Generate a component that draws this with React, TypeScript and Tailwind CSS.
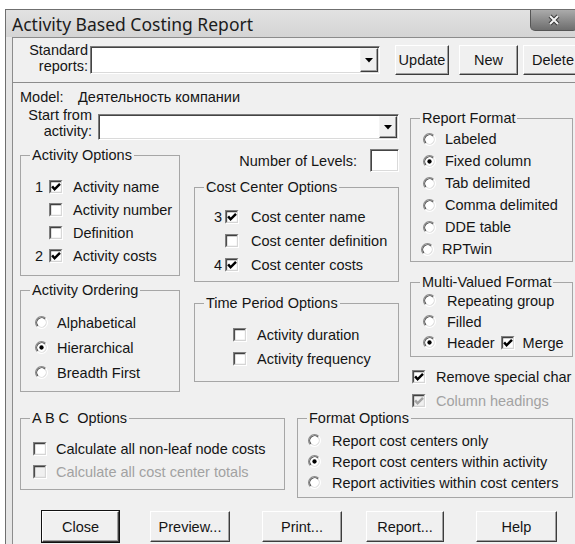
import React from 'react';

type Kids = { children?: React.ReactNode; className?: string };

const Check = ({ checked = false, disabled = false }: { checked?: boolean; disabled?: boolean }) => (
  <svg width="14" height="14" viewBox="0 0 13 13" className="shrink-0">
    <rect x="0" y="0" width="13" height="13" fill={disabled ? '#f0f0f0' : '#fff'} />
    <path d="M0.5 12.5V0.5H12.5" stroke="#808080" fill="none" />
    <path d="M1.5 11.5V1.5H11.5" stroke="#404040" fill="none" />
    <path d="M0.5 12.5H12.5V0.5" stroke="#fff" fill="none" />
    <path d="M1.5 11.5H11.5V1.5" stroke="#d4d4d4" fill="none" />
    {checked && (
      <path d="M2.9 5.9L5.2 8.6L10.2 3.5" stroke={disabled ? '#a4a4a4' : '#000'} strokeWidth="2.3" fill="none" />
    )}
  </svg>
);

const Radio = ({ checked = false }: { checked?: boolean }) => (
  <svg width="13" height="13" viewBox="0 0 12 12" className="shrink-0">
    <circle cx="6" cy="6" r="5.5" fill="#fff" />
    <path d="M2.11 9.89A5.5 5.5 0 0 1 9.89 2.11" stroke="#8c8c8c" fill="none" />
    <path d="M2.82 9.18A4.5 4.5 0 0 1 9.18 2.82" stroke="#4a4a4a" fill="none" />
    <path d="M9.89 2.11A5.5 5.5 0 0 1 2.11 9.89" stroke="#fff" fill="none" />
    <path d="M9.18 2.82A4.5 4.5 0 0 1 2.82 9.18" stroke="#dcdcdc" fill="none" />
    {checked && <circle cx="6" cy="6" r="2" fill="#000" />}
  </svg>
);

const Btn = ({ children, className = '', primary = false }: Kids & { primary?: boolean }) => (
  <button
    className={`flex items-center justify-center bg-[#f0f0f0] border border-t-white border-l-white border-r-[#3c3c3c] border-b-[#3c3c3c] shadow-[inset_-1px_-1px_0_#a0a0a0] ${
      primary ? 'outline outline-1 outline-[#111]' : ''
    } ${className}`}
  >
    {children}
  </button>
);

const Field = ({ children, className = '' }: Kids) => (
  <div
    className={`flex justify-end bg-white p-[1px] border border-t-[#7c7c7c] border-l-[#7c7c7c] border-r-white border-b-white shadow-[inset_1px_1px_0_#444,inset_-1px_-1px_0_#dadada] ${className}`}
  >
    {children}
  </div>
);

const Combo = ({ className = '' }: { className?: string }) => (
  <Field className={className}>
    <div className="flex w-[18px] items-center justify-center bg-[#f0f0f0] border border-t-[#f4f4f4] border-l-[#f4f4f4] border-r-[#3c3c3c] border-b-[#3c3c3c] shadow-[inset_-1px_-1px_0_#a0a0a0]">
      <svg width="8" height="5" viewBox="0 0 8 5">
        <path d="M0 0H8L4 4.5Z" fill="#000" />
      </svg>
    </div>
  </Field>
);

const Group = ({ title, children, className = '' }: Kids & { title: string }) => (
  <fieldset className={`border border-[#a6a6a6] ${className}`}>
    <legend className="ml-[9px] px-[2px] leading-[16px] whitespace-pre">{title}</legend>
    {children}
  </fieldset>
);

export default function App() {
  return (
    <div className="w-[575px] h-[544px] overflow-hidden bg-white font-['Liberation_Sans',Arial,sans-serif] text-[14.5px] leading-[16px] text-[#151515]">
      <div className="mt-[9px] ml-[5px] w-[620px] h-[600px] border-t border-l border-[#6f6f6f] bg-[#e6e6e6]">
        {/* title bar */}
        <div className="flex h-[27px] bg-gradient-to-b from-[#e2e2e2] to-[#d4d4d4]">
          <span className="self-center pl-[6px] font-['Noto_Sans',sans-serif] text-[17.5px] leading-[20px] text-[#1c1c1c]">
            Activity Based Costing Report
          </span>
          <div className="ml-auto mr-[47px] flex h-[21px] w-[48px] items-center justify-center rounded-b-[5px] border border-t-0 border-[#555] bg-gradient-to-b from-[#ababab] to-[#6e6e6e]">
            <svg width="14" height="12" viewBox="0 0 14 12">
              <path d="M3 2L11 10M11 2L3 10" stroke="#3a3a3a" strokeWidth="4" />
              <path d="M3 2L11 10M11 2L3 10" stroke="#f4f4f4" strokeWidth="2" />
            </svg>
          </div>
        </div>

        {/* client area */}
        <div className="ml-[6px] h-full border-t border-l border-[#8c8c8c] bg-[#f0f0f0]">
          <div className="flex h-[45px] border-b border-[#8c8c8c]">
            <div className="mt-[4px] w-[75px] text-right">
              Standard
              <br />
              reports:
            </div>
            <Combo className="ml-[2px] mt-[8px] h-[28px] w-[290px]" />
            <Btn className="ml-[15px] mt-[7px] h-[30px] w-[54px]">Update</Btn>
            <Btn className="ml-[10px] mt-[7px] h-[30px] w-[59px]">New</Btn>
            <Btn className="ml-[5px] mt-[7px] h-[30px] w-[60px]">Delete</Btn>
          </div>

          <div className="pl-[7px]">
            <div className="flex h-[327px]">
              {/* left side */}
              <div className="w-[380px]">
                <div className="mt-[6px] flex">
                  <span className="w-[58px]">Model:</span>
                  <span>Деятельность компании</span>
                </div>
                <div className="mt-[2px] flex">
                  <div className="w-[72px] text-right">
                    Start from
                    <br />
                    activity:
                  </div>
                  <Combo className="ml-[6px] mt-[7px] h-[26px] w-[301px]" />
                </div>

                <div className="flex">
                  <div className="w-[160px]">
                    <Group title="Activity Options" className="mt-[7px] h-[129px]">
                      <div className="mt-[12px] flex flex-col">
                        {[
                          ['1', true, 'Activity name'],
                          ['', false, 'Activity number'],
                          ['', false, 'Definition'],
                          ['2', true, 'Activity costs'],
                        ].map(([n, c, label]) => (
                          <div key={label as string} className="flex h-[23px] items-center">
                            <span className="w-[22px] text-right">{n}</span>
                            <span className="ml-[6px]">
                              <Check checked={c as boolean} />
                            </span>
                            <span className="ml-[10px]">{label}</span>
                          </div>
                        ))}
                      </div>
                    </Group>
                    <Group title="Activity Ordering" className="mt-[6px] h-[110px]">
                      <div className="mt-[12px] flex flex-col pl-[14px]">
                        {['Alphabetical', 'Hierarchical', 'Breadth First'].map((label, i) => (
                          <div key={label} className="flex h-[25px] items-center">
                            <Radio checked={i === 1} />
                            <span className="ml-[9px]">{label}</span>
                          </div>
                        ))}
                      </div>
                    </Group>
                  </div>

                  <div className="ml-[14px] w-[205px]">
                    <div className="mt-[9px] flex h-[23px] items-center justify-end">
                      <span>Number of Levels:</span>
                      <Field className="ml-[13px] h-[23px] w-[29px]" />
                    </div>
                    <Group title="Cost Center Options" className="mt-[7px] h-[103px]">
                      <div className="mt-[10px] flex flex-col">
                        {[
                          ['3', true, 'Cost center name'],
                          ['', false, 'Cost center definition'],
                          ['4', true, 'Cost center costs'],
                        ].map(([n, c, label]) => (
                          <div key={label as string} className="flex h-[24px] items-center">
                            <span className="w-[27px] text-right">{n}</span>
                            <span className="ml-[3px]">
                              <Check checked={c as boolean} />
                            </span>
                            <span className="ml-[12px]">{label}</span>
                          </div>
                        ))}
                      </div>
                    </Group>
                    <Group title="Time Period Options" className="mt-[13px] h-[87px]">
                      <div className="mt-[12px] flex flex-col pl-[38px]">
                        {['Activity duration', 'Activity frequency'].map((label) => (
                          <div key={label} className="flex h-[24px] items-center">
                            <Check />
                            <span className="ml-[10px]">{label}</span>
                          </div>
                        ))}
                      </div>
                    </Group>
                  </div>
                </div>
              </div>

              {/* right side */}
              <div className="ml-[10px] w-[163px]">
                <Group title="Report Format" className="mt-[27px] h-[152px]">
                  <div className="mt-[2px] flex flex-col pl-[12px]">
                    {['Labeled', 'Fixed column', 'Tab delimited', 'Comma delimited', 'DDE table'].map((label, i) => (
                      <div key={label} className="flex h-[22px] items-center">
                        <Radio checked={i === 1} />
                        <span className="ml-[9px]">{label}</span>
                      </div>
                    ))}
                    <div className="-ml-[2px] flex h-[22px] items-center">
                      <Radio />
                      <span className="ml-[8px]">RPTwin</span>
                    </div>
                  </div>
                </Group>
                <Group title="Multi-Valued Format" className="mt-[12px] h-[83px]">
                  <div className="flex flex-col pl-[12px]">
                    <div className="flex h-[21px] items-center">
                      <Radio />
                      <span className="ml-[11px]">Repeating group</span>
                    </div>
                    <div className="flex h-[21px] items-center">
                      <Radio />
                      <span className="ml-[11px]">Filled</span>
                    </div>
                    <div className="flex h-[21px] items-center">
                      <Radio checked />
                      <span className="ml-[11px]">Header</span>
                      <span className="ml-[6px]">
                        <Check checked />
                      </span>
                      <span className="ml-[8px]">Merge</span>
                    </div>
                  </div>
                </Group>
                <div className="mt-[10px] flex h-[20px] items-center pl-[2px]">
                  <Check checked />
                  <span className="ml-[10px]">Remove special char</span>
                </div>
                <div className="mt-[4px] flex h-[19px] items-center pl-[2px] text-[#a2a2a2]">
                  <Check checked disabled />
                  <span className="ml-[10px]">Column headings</span>
                </div>
              </div>
            </div>

            {/* bottom groups */}
            <div className="flex items-start">
              <Group title="A B C  Options" className="h-[80px] w-[265px]">
                <div className="mt-[11px] flex flex-col pl-[12px]">
                  <div className="flex h-[23px] items-center">
                    <Check />
                    <span className="ml-[9px]">Calculate all non-leaf node costs</span>
                  </div>
                  <div className="flex h-[23px] items-center text-[#a2a2a2]">
                    <Check disabled />
                    <span className="ml-[9px]">Calculate all cost center totals</span>
                  </div>
                </div>
              </Group>
              <Group title="Format Options" className="ml-[12px] h-[88px] w-[276px]">
                <div className="mt-[4px] flex flex-col pl-[10px]">
                  {[
                    'Report cost centers only',
                    'Report cost centers within activity',
                    'Report activities within cost centers',
                  ].map((label, i) => (
                    <div key={label} className="flex h-[21px] items-center">
                      <Radio checked={i === 1} />
                      <span className="ml-[11px]">{label}</span>
                    </div>
                  ))}
                </div>
              </Group>
            </div>

            {/* buttons */}
            <div className="mt-[13px] flex">
              <Btn primary className="ml-[22px] h-[31px] w-[77px]">Close</Btn>
              <Btn className="ml-[31px] h-[31px] w-[80px]">Preview...</Btn>
              <Btn className="ml-[32px] h-[31px] w-[80px]">Print...</Btn>
              <Btn className="ml-[24px] h-[31px] w-[78px]">Report...</Btn>
              <Btn className="ml-[32px] h-[31px] w-[81px]">Help</Btn>
            </div>
          </div>
        </div>
      </div>
    </div>
  );
}
